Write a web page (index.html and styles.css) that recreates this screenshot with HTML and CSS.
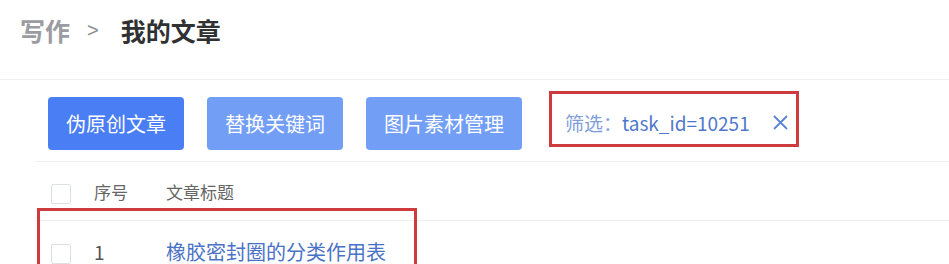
FILE: index.html
```html
<!doctype html>
<html lang="zh-CN">
  <head>
    <meta charset="utf-8"/>
    <title>我的文章</title>
    <link rel="stylesheet" href="styles.css">
  </head>
  <body>
    <!-- breadcrumb -->
    <div class="crumbs">
      <span class="crumb-parent">写作</span>
      <span class="crumb-sep">&gt;</span>
      <span class="crumb-current">我的文章</span>
    </div>

    <div class="content">
      <div class="toolbar">
        <button class="btn btn-primary">伪原创文章</button>
        <button class="btn btn-light">替换关键词</button>
        <button class="btn btn-light">图片素材管理</button>
        <div class="filter">
          <span class="filter-label">筛选：</span>
          <span class="filter-value">task_id=10251</span>
          <svg class="filter-close" width="15" height="15" viewBox="0 0 15 15">
            <path d="M1 1 L14 14 M14 1 L1 14" stroke="#5b84d4" stroke-width="1.8" fill="none"/>
          </svg>
        </div>
      </div>

      <div class="table">
        <div class="row head">
          <span class="check"></span>
          <span class="col-no">序号</span>
          <span class="col-title">文章标题</span>
        </div>
        <div class="row">
          <span class="check"></span>
          <span class="col-no">1</span>
          <a class="col-title link" href="#">橡胶密封圈的分类作用表</a>
        </div>
        <div class="mark"></div>
      </div>
    </div>
  </body>
</html>
```

FILE: styles.css
```css
/* base */
body{
  margin: 0;
  font-family: "Noto Sans CJK SC", "Liberation Sans", sans-serif;
  background: #fff;
  color: #333;
  overflow: hidden;
}

/* breadcrumb */
.crumbs{
  height: 80px;
  box-sizing: border-box;
  padding: 12px 0 0 20px;
  border-bottom: 1px solid #f0f0f2;
  display: flex;
  align-items: flex-start;
}
.crumb-parent,
.crumb-current{
  font-size: 25px;
  line-height: 36px;
  font-weight: 700;
}
.crumb-parent{
  color: #9a9ca1;
}
.crumb-current{
  color: #303133;
}
.crumb-sep{
  font-family: "Liberation Sans", sans-serif;
  font-size: 20px;
  line-height: 36px;
  color: #8b8d92;
  margin: 0 22px 0 17px;
}

/* toolbar */
.content{
  padding-left: 35px;
}
.toolbar{
  display: flex;
  align-items: center;
  padding: 17px 0 0 13px;
}
.btn{
  height: 53px;
  border: none;
  border-radius: 4px;
  padding: 0 18px;
  margin-right: 23px;
  font-family: inherit;
  font-size: 20px;
  color: #fff;
}
.btn-primary{
  background: #4a7ef4;
}
.btn-light{
  background: #729ef6;
}
.filter{
  display: flex;
  align-items: center;
  width: 250px;
  height: 56px;
  box-sizing: border-box;
  border: 3px solid #cf3a3f;
  padding: 7px 0 0 13px;
  margin: -9px 0 0 4px;
  font-size: 19px;
}
.filter-label{
  color: #7f9ddb;
}
.filter-value{
  color: #4f78cc;
}
.filter-close{
  margin-left: 23px;
}

/* table */
.table{
  position: relative;
  margin-top: 11px;
  border-top: 1px solid #eef0f3;
}
.row{
  display: flex;
  align-items: center;
  height: 58px;
  padding-left: 16px;
  border-bottom: 1px solid #eef0f3;
}
.row + .row{
  height: 60px;
  border-bottom: none;
}
.check{
  width: 18px;
  height: 18px;
  border: 1px solid #dcdfe6;
  border-radius: 2px;
  margin-top: 6px;
}
.col-no{
  width: 95px;
  box-sizing: border-box;
  padding-left: 23px;
  font-size: 19px;
  color: #555;
}
.head .col-no,
.head .col-title{
  font-size: 17px;
  color: #666;
}
.link{
  font-size: 20px;
  color: #4a72c6;
  text-decoration: none;
}

/* red highlight drawn over the first row */
.mark{
  position: absolute;
  left: 2px;
  top: 46px;
  width: 380px;
  height: 80px;
  box-sizing: border-box;
  border: 3px solid #cf3a3f;
}
```
